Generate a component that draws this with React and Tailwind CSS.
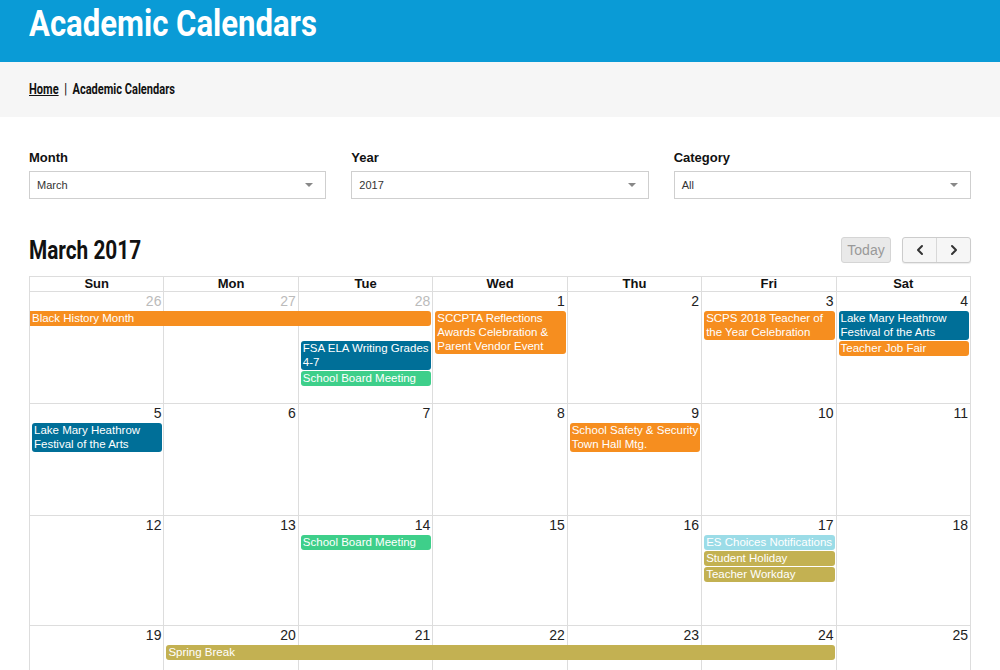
import { ChevronLeft, ChevronRight } from "lucide-react";

const COL_START = ["col-start-1", "col-start-2", "col-start-3", "col-start-4", "col-start-5", "col-start-6", "col-start-7"];
const COL_SPAN = ["col-span-1", "col-span-2", "col-span-3", "col-span-4", "col-span-5", "col-span-6", "col-span-7"];
const ROW_START = ["row-start-2", "row-start-3", "row-start-4", "row-start-5"];

const COLORS = {
  orange: "bg-[#f68e1f]",
  blue: "bg-[#006f98]",
  green: "bg-[#3ecf8a]",
  sky: "bg-[#9bdce7]",
  gold: "bg-[#c3b152]",
};

const weeks = [
  {
    height: "h-[112px]",
    days: [
      { n: 26, other: true },
      { n: 27, other: true },
      { n: 28, other: true },
      { n: 1 },
      { n: 2 },
      { n: 3 },
      { n: 4 },
    ],
    events: [
      { col: 0, span: 3, row: 0, title: "Black History Month", color: "orange", cont: true },
      { col: 3, span: 1, row: 0, tall: true, title: "SCCPTA Reflections Awards Celebration & Parent Vendor Event", color: "orange" },
      { col: 5, span: 1, row: 0, title: "SCPS 2018 Teacher of the Year Celebration", color: "orange" },
      { col: 6, span: 1, row: 0, title: "Lake Mary Heathrow Festival of the Arts", color: "blue" },
      { col: 2, span: 1, row: 1, title: "FSA ELA Writing Grades 4-7", color: "blue" },
      { col: 6, span: 1, row: 1, title: "Teacher Job Fair", color: "orange" },
      { col: 2, span: 1, row: 2, title: "School Board Meeting", color: "green" },
    ],
  },
  {
    height: "h-[112px]",
    days: [5, 6, 7, 8, 9, 10, 11].map((n) => ({ n })),
    events: [
      { col: 0, span: 1, row: 0, title: "Lake Mary Heathrow Festival of the Arts", color: "blue" },
      { col: 4, span: 1, row: 0, title: "School Safety & Security Town Hall Mtg.", color: "orange" },
    ],
  },
  {
    height: "h-[110px]",
    days: [12, 13, 14, 15, 16, 17, 18].map((n) => ({ n })),
    events: [
      { col: 2, span: 1, row: 0, title: "School Board Meeting", color: "green" },
      { col: 5, span: 1, row: 0, title: "ES Choices Notifications", color: "sky" },
      { col: 5, span: 1, row: 1, title: "Student Holiday", color: "gold" },
      { col: 5, span: 1, row: 2, title: "Teacher Workday", color: "gold" },
    ],
  },
  {
    height: "h-[112px]",
    days: [19, 20, 21, 22, 23, 24, 25].map((n) => ({ n })),
    events: [{ col: 1, span: 5, row: 0, title: "Spring Break", color: "gold" }],
  },
];

const SelectBox = ({ label, value }) => (
  <div>
    <p className="text-[13px] leading-[16px] font-bold text-[#111] mb-[5px]">{label}</p>
    <div className="h-[28px] border border-[#cfcfcf] bg-white flex items-center justify-between pl-[7px] pr-[12px]">
      <span className="text-[11px] text-[#333]">{value}</span>
      <span className="w-0 h-0 border-l-[4px] border-r-[4px] border-t-[4px] border-l-transparent border-r-transparent border-t-[#888]" />
    </div>
  </div>
);

const Week = ({ week }) => (
  <div className={`grid grid-cols-7 grid-rows-[19px_auto_auto_auto_auto_1fr] border-b border-[#ddd] ${week.height}`}>
    {week.days.map((d, i) => (
      <div key={"c" + i} className={`${COL_START[i]} row-start-1 row-span-6 border-r border-[#ddd]`} />
    ))}
    {week.days.map((d, i) => (
      <div
        key={"n" + i}
        className={`${COL_START[i]} row-start-1 text-right pr-[3px] pt-[1px] text-[14px] leading-[16px] ${d.other ? "text-[#bbb]" : "text-[#222]"}`}
      >
        {d.n}
      </div>
    ))}
    {week.events.map((e, i) => (
      <div
        key={"e" + i}
        className={`${COL_START[e.col]} ${COL_SPAN[e.span - 1]} ${ROW_START[e.row]} ${e.tall ? "row-span-2" : ""} self-start mb-[1px] ${e.cont ? "ml-0 mr-[2px] rounded-r-[3px]" : "mx-[2px] rounded-[3px]"} ${COLORS[e.color]} text-white text-[11.5px] leading-[14px] pb-[1px] pl-[2px]`}
      >
        {e.title}
      </div>
    ))}
  </div>
);

const App = () => {
  return (
    <div className="min-h-screen bg-white font-['Liberation_Sans',Arial,sans-serif]">
      {/* Page banner */}
      <header className="h-[62px] bg-[#0a9bd6] px-[29px] pt-[2px] overflow-hidden">
        <h1 className="inline-block origin-left scale-x-[0.84] text-white text-[37px] leading-[44px] font-bold font-['Roboto',sans-serif] whitespace-nowrap">
          Academic Calendars
        </h1>
      </header>

      {/* Breadcrumb */}
      <nav className="h-[55px] bg-[#f6f6f6] px-[29px] flex items-center">
        <div className="inline-block origin-left scale-x-[0.79] whitespace-nowrap text-[14px] font-bold text-[#111] font-['Roboto',sans-serif]">
          <a className="underline">Home</a>
          <span className="mx-[7px]">|</span>
          <span>Academic Calendars</span>
        </div>
      </nav>

      <div className="w-[942px] ml-[29px] pt-[33px]">
        {/* Filters */}
        <div className="grid grid-cols-3 gap-[25px]">
          <SelectBox label="Month" value="March" />
          <SelectBox label="Year" value="2017" />
          <SelectBox label="Category" value="All" />
        </div>

        {/* Toolbar */}
        <div className="mt-[38px] mb-[13px] flex items-center justify-between h-[26px]">
          <h2 className="inline-block origin-left scale-x-[0.8] whitespace-nowrap text-[26px] font-bold text-[#111] font-['Roboto',sans-serif]">
            March 2017
          </h2>
          <div className="flex items-center gap-[11px]">
            <button className="h-[26px] w-[50px] rounded-[3px] border border-[#d5d5d5] bg-[#e9e9e9] text-[14px] text-[#999]">
              Today
            </button>
            <div className="flex h-[26px] rounded-[3px] border border-[#ccc] bg-[#f6f6f6] shadow-[0_1px_1px_rgba(0,0,0,0.08)]">
              <button className="w-[34px] flex items-center justify-center border-r border-[#d8d8d8] text-[#333]">
                <ChevronLeft size={16} strokeWidth={3} />
              </button>
              <button className="w-[33px] flex items-center justify-center text-[#333]">
                <ChevronRight size={16} strokeWidth={3} />
              </button>
            </div>
          </div>
        </div>

        {/* Calendar */}
        <div className="border-l border-t border-[#ddd]">
          <div className="grid grid-cols-7 border-b border-[#ddd]">
            {["Sun", "Mon", "Tue", "Wed", "Thu", "Fri", "Sat"].map((d) => (
              <div key={d} className="border-r border-[#ddd] text-center text-[13px] leading-[14px] font-bold text-[#111]">
                {d}
              </div>
            ))}
          </div>
          {weeks.map((w, i) => (
            <Week key={i} week={w} />
          ))}
        </div>
      </div>
    </div>
  );
};

export default App;
